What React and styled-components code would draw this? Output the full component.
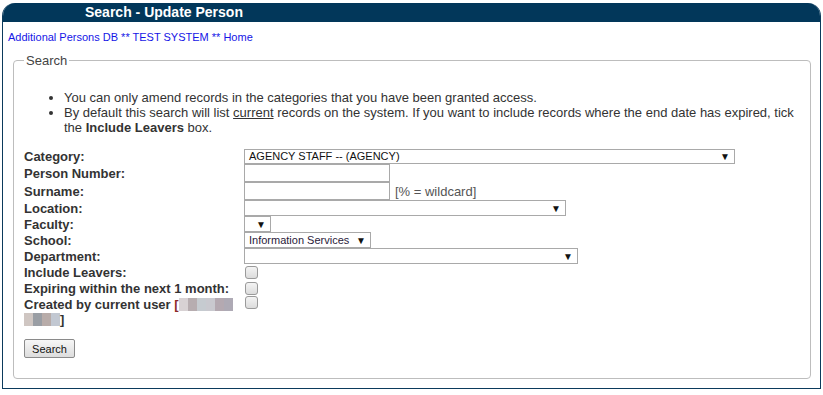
import React from 'react'
import styled, { createGlobalStyle } from 'styled-components'

const GlobalStyle = createGlobalStyle`
  html, body {
    margin: 0;
    padding: 0;
    background: #ffffff;
  }
  body {
    font-family: "Liberation Sans", Arial, sans-serif;
    color: #333333;
  }
`

export default function App() {
  return (
    <>
      <GlobalStyle />
      <Page>
        <Panel>
          <Header>Search - Update Person</Header>
          <Content>
            <Crumb href="#">Additional Persons DB ** TEST SYSTEM ** Home</Crumb>
            <Fieldset>
              <Legend>Search</Legend>
              <Notes>
                <li>You can only amend records in the categories that you have been granted access.</li>
                <li>
                  By default this search will list <u>current</u> records on the system. If you want to include records where the end date has expired, tick the <b>Include Leavers</b> box.
                </li>
              </Notes>
              <FormTable>
                <tbody>
                  <Row h={16}>
                    <Label>Category:</Label>
                    <Cell>
                      <Select w={491} h={15}>
                        <span>AGENCY STAFF -- (AGENCY)</span>
                        <Arrow>▼</Arrow>
                      </Select>
                    </Cell>
                  </Row>
                  <Row h={18}>
                    <Label>Person Number:</Label>
                    <Cell><TextBox /></Cell>
                  </Row>
                  <Row h={18}>
                    <Label>Surname:</Label>
                    <Cell>
                      <TextBox />
                      <Hint>[% = wildcard]</Hint>
                    </Cell>
                  </Row>
                  <Row h={16}>
                    <Label>Location:</Label>
                    <Cell>
                      <Select w={322} h={16}><span /><Arrow>▼</Arrow></Select>
                    </Cell>
                  </Row>
                  <Row h={16}>
                    <Label>Faculty:</Label>
                    <Cell>
                      <Select w={27} h={16}><span /><Arrow>▼</Arrow></Select>
                    </Cell>
                  </Row>
                  <Row h={16}>
                    <Label>School:</Label>
                    <Cell>
                      <Select w={127} h={16} tint="#2a1a3a">
                        <span>Information Services</span>
                        <Arrow>▼</Arrow>
                      </Select>
                    </Cell>
                  </Row>
                  <Row h={16}>
                    <Label>Department:</Label>
                    <Cell>
                      <Select w={334} h={16}><span /><Arrow>▼</Arrow></Select>
                    </Cell>
                  </Row>
                  <Row h={16}>
                    <Label>Include Leavers:</Label>
                    <Cell><Check type="checkbox" /></Cell>
                  </Row>
                  <Row h={16}>
                    <Label>Expiring within the next 1 month:</Label>
                    <Cell><Check type="checkbox" /></Cell>
                  </Row>
                  <Row h={32}>
                    <Label>
                      Created by current user <Bracket>[</Bracket>
                      <Mosaic>
                        <Tile c="#d8d2d4" /><Tile c="#b7adb0" /><Tile c="#c6cbd0" /><Tile c="#c9c9cf" /><Tile c="#b4a9b1" /><Tile c="#aeaab5" />
                      </Mosaic>
                      <br />
                      <Mosaic>
                        <Tile c="#cfc6c2" /><Tile c="#9a9ea4" /><Tile c="#b8aca9" /><Tile c="#c2c8d2" />
                      </Mosaic>
                      ]
                    </Label>
                    <Cell top><Check type="checkbox" /></Cell>
                  </Row>
                </tbody>
              </FormTable>
              <Button type="button">Search</Button>
            </Fieldset>
          </Content>
        </Panel>
      </Page>
    </>
  )
}

const Page = styled.div`
  padding: 3px 2px 0 2px;
  width: 819px;
`

const Panel = styled.div`
  border: 1px solid #0b3a5c;
  border-top: none;
  border-radius: 13px 13px 0 0;
  overflow: hidden;
  height: 386px;
  box-sizing: border-box;
  display: flex;
  flex-direction: column;
`

const Header = styled.div`
  background: #02375a;
  color: #ffffff;
  font-weight: bold;
  font-size: 14px;
  height: 19px;
  line-height: 19px;
  padding-left: 83px;
  margin: 0 -1px;
`

const Content = styled.div`
  flex: 1;
  display: flex;
  flex-direction: column;
  padding: 8px 9px 9px 5px;
`

const Crumb = styled.a`
  font-size: 11px;
  line-height: 14px;
  color: #1515e6;
  text-decoration: none;
  margin-bottom: 9px;
`

const Fieldset = styled.fieldset`
  flex: 1;
  margin: 0 0 0 5px;
  padding: 0 10px;
  border: 1px solid #bdbdbd;
  border-radius: 4px;
  min-width: 0;
`

const Legend = styled.legend`
  font-size: 13px;
  color: #444444;
  padding: 0 2px;
  margin-left: 0;
  line-height: 15px;
`

const Notes = styled.ul`
  margin: 22px 0 13px 0;
  padding-left: 40px;
  font-size: 13px;
  line-height: 15px;
  color: #333333;

  li {
    margin: 0;
  }
`

const FormTable = styled.table`
  border-collapse: collapse;
  border-spacing: 0;
`

const Row = styled.tr`
  height: ${p => p.h}px;
`

const Label = styled.td`
  width: 220px;
  padding: 0;
  font-size: 13px;
  font-weight: bold;
  line-height: 15px;
  color: #333333;
  vertical-align: middle;
`

const Cell = styled.td`
  padding: 0;
  vertical-align: ${p => (p.top ? 'top' : 'middle')};
  font-size: 11px;
  line-height: 0;
`

const Select = styled.div`
  display: inline-flex;
  align-items: center;
  justify-content: space-between;
  box-sizing: border-box;
  width: ${p => p.w}px;
  height: ${p => p.h}px;
  border: 1px solid #a9a9a9;
  background: #ffffff;
  padding: 0 4px 0 4px;
  font-size: 11px;
  line-height: 13px;
  color: ${p => p.tint || '#111111'};
  white-space: nowrap;
`

const Arrow = styled.span`
  font-size: 10px;
  color: #111111;
  line-height: 13px;
`

const TextBox = styled.input`
  box-sizing: border-box;
  width: 146px;
  height: 18px;
  margin: 0;
  border: 1px solid #a9a9a9;
  padding: 0 3px;
  vertical-align: middle;
`

const Hint = styled.span`
  font-size: 13px;
  line-height: 15px;
  color: #555555;
  margin-left: 5px;
  vertical-align: middle;
`

const Check = styled.input`
  appearance: none;
  box-sizing: border-box;
  width: 13px;
  height: 13px;
  margin: 0 0 0 1px;
  border: 1px solid #9a9a9a;
  border-radius: 3px;
  background: linear-gradient(#f4f4f4, #dcdcdc);
  vertical-align: middle;
`

const Bracket = styled.span`
  color: #8b2a2a;
`

const Mosaic = styled.span`
  display: inline-flex;
  height: 13px;
  vertical-align: -2px;
`

const Tile = styled.span`
  width: 9px;
  height: 13px;
  background: ${p => p.c};
`

const Button = styled.button`
  display: block;
  margin: 11px 0 0 0;
  width: 51px;
  height: 19px;
  padding: 0;
  font-family: "Liberation Sans", Arial, sans-serif;
  font-size: 11px;
  color: #111111;
  border: 1px solid #8a8a8a;
  border-radius: 2px;
  background: linear-gradient(#f6f6f6, #dddddd);
`
